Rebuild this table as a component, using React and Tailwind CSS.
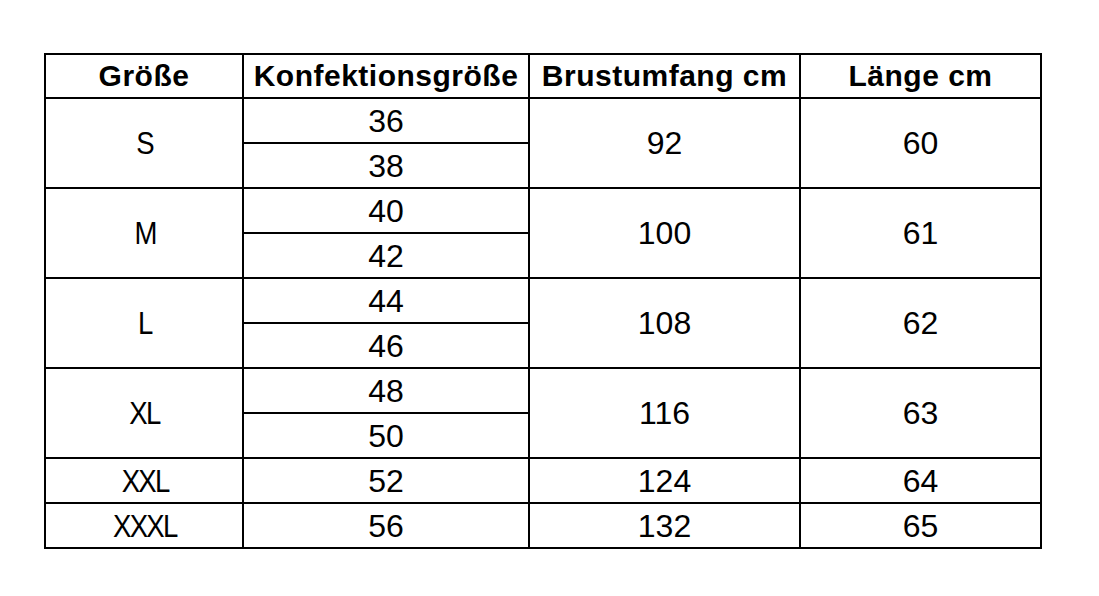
const groups = [
  { size: "S", konf: ["36", "38"], brust: "92", laenge: "60" },
  { size: "M", konf: ["40", "42"], brust: "100", laenge: "61" },
  { size: "L", konf: ["44", "46"], brust: "108", laenge: "62" },
  { size: "XL", konf: ["48", "50"], brust: "116", laenge: "63" },
  { size: "XXL", konf: ["52"], brust: "124", laenge: "64" },
  { size: "XXXL", konf: ["56"], brust: "132", laenge: "65" },
];

const cell = "border-2 border-black text-center align-middle p-0";
const head = "font-bold text-[30px] tracking-[0.5px]";

export default function App() {
  return (
    <div className="w-[1099px] h-[596px] bg-white pl-[44px] pt-[53px] font-['Liberation_Sans',Arial,sans-serif] text-black">
      <table className="border-collapse table-fixed w-[996px] text-[32px] leading-none">
        <colgroup>
          <col className="w-[198px]" />
          <col className="w-[286px]" />
          <col className="w-[271px]" />
          <col className="w-[241px]" />
        </colgroup>
        <thead>
          <tr className="h-[44px]">
            <th className={`${cell} ${head}`}>Größe</th>
            <th className={`${cell} ${head}`}>Konfektionsgröße</th>
            <th className={`${cell} ${head}`}>Brustumfang cm</th>
            <th className={`${cell} ${head}`}>Länge cm</th>
          </tr>
        </thead>
        <tbody>
          {groups.map((g) =>
            g.konf.map((k, i) => (
              <tr key={g.size + k} className="h-[45px]">
                {i === 0 && (
                  <td rowSpan={g.konf.length} className={cell}>
                    <span className="inline-block scale-x-[0.86] tracking-[-2px] pl-[2px]">{g.size}</span>
                  </td>
                )}
                <td className={cell}>{k}</td>
                {i === 0 && (
                  <td rowSpan={g.konf.length} className={cell}>
                    {g.brust}
                  </td>
                )}
                {i === 0 && (
                  <td rowSpan={g.konf.length} className={cell}>
                    {g.laenge}
                  </td>
                )}
              </tr>
            ))
          )}
        </tbody>
      </table>
    </div>
  );
}
